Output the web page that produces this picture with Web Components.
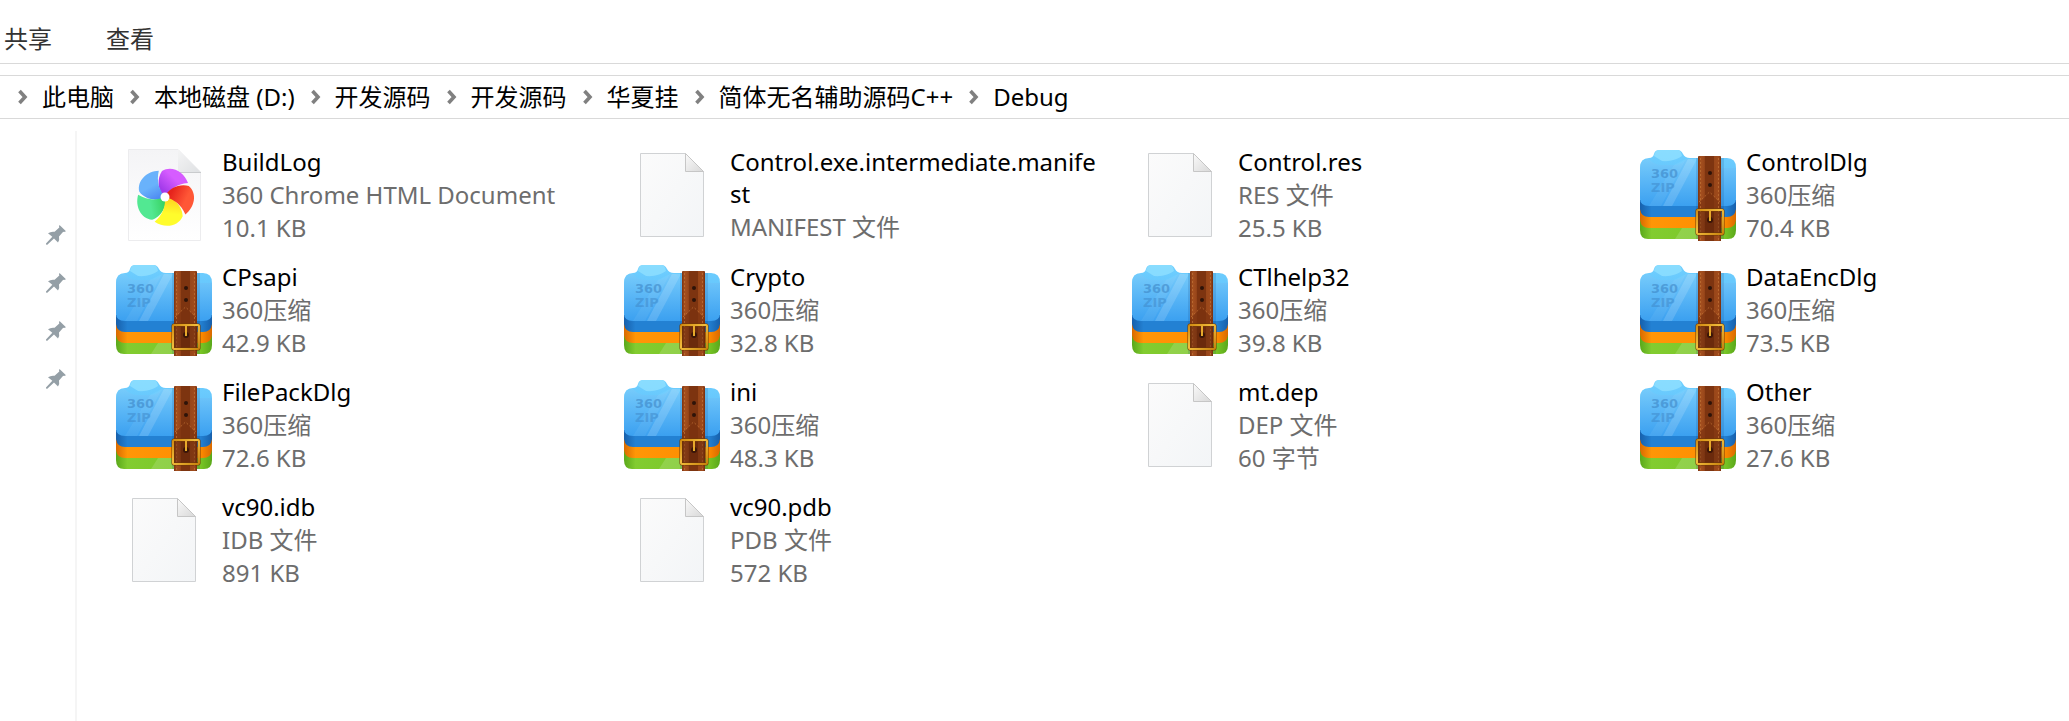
<!DOCTYPE html>
<html lang="zh-CN">
<head>
    <meta charset="utf-8">
    <title>Debug</title>
    <style>
    html, body {
      height: 100%;
      margin: 0;
      background: #fff;
    }
    </style>
</head>
<body>

    <explorer-window>
        <ribbon-tabs slot="ribbon">
            <button>共享</button>
            <button>查看</button>
        </ribbon-tabs>

        <path-bar slot="path">
            <path-crumb>此电脑</path-crumb>
            <path-crumb>本地磁盘 (D:)</path-crumb>
            <path-crumb>开发源码</path-crumb>
            <path-crumb>开发源码</path-crumb>
            <path-crumb>华夏挂</path-crumb>
            <path-crumb>简体无名辅助源码C++</path-crumb>
            <path-crumb>Debug</path-crumb>
        </path-bar>

        <quick-access slot="side"></quick-access>

        <file-grid>
            <file-item icon="html" name="BuildLog" type="360 Chrome HTML Document" size="10.1 KB"></file-item>
            <file-item icon="blank" name="Control.exe.intermediate.manifest" type="MANIFEST 文件"></file-item>
            <file-item icon="blank" name="Control.res" type="RES 文件" size="25.5 KB"></file-item>
            <file-item icon="zip" name="ControlDlg" type="360压缩" size="70.4 KB"></file-item>
            <file-item icon="zip" name="CPsapi" type="360压缩" size="42.9 KB"></file-item>
            <file-item icon="zip" name="Crypto" type="360压缩" size="32.8 KB"></file-item>
            <file-item icon="zip" name="CTlhelp32" type="360压缩" size="39.8 KB"></file-item>
            <file-item icon="zip" name="DataEncDlg" type="360压缩" size="73.5 KB"></file-item>
            <file-item icon="zip" name="FilePackDlg" type="360压缩" size="72.6 KB"></file-item>
            <file-item icon="zip" name="ini" type="360压缩" size="48.3 KB"></file-item>
            <file-item icon="blank" name="mt.dep" type="DEP 文件" size="60 字节"></file-item>
            <file-item icon="zip" name="Other" type="360压缩" size="27.6 KB"></file-item>
            <file-item icon="blank" name="vc90.idb" type="IDB 文件" size="891 KB"></file-item>
            <file-item icon="blank" name="vc90.pdb" type="PDB 文件" size="572 KB"></file-item>
        </file-grid>
    </explorer-window>

    <template id="tmpl-window">
        <style>
        :host {
          display: flex;
          flex-direction: column;
          min-height: 100%;
          color: #000;
          font: 24px/32px "Noto Sans", "Noto Sans CJK SC", sans-serif;
        }
        header {
          padding: 23px 0 8px;
          border-bottom: 1px solid #d9d9d9;
        }
        .path {
          margin-top: 11px;
          padding: 5px 0;
          border-top: 1px solid #d9d9d9;
          border-bottom: 1px solid #d9d9d9;
        }
        .body {
          flex: 1;
          display: flex;
          padding-top: 12px;
        }
        aside {
          flex: none;
          width: 75px;
          border-right: 2px solid #f5f5f5;
        }
        main {
          flex: 1;
          min-width: 0;
          padding: 15px 0 15px 39px;
        }
        </style>
        <header><slot name="ribbon"></slot></header>
        <div class="path"><slot name="path"></slot></div>
        <div class="body">
            <aside><slot name="side"></slot></aside>
            <main><slot></slot></main>
        </div>
    </template>

    <template id="tmpl-tabs">
        <style>
        :host {
          display: flex;
          gap: 54px;
          padding-left: 4px;
        }
        ::slotted(button) {
          padding: 0;
          border: 0;
          background: none;
          color: #333;
          font: inherit;
        }
        </style>
        <slot></slot>
    </template>

    <template id="tmpl-path">
        <style>
        :host {
          display: block;
        }
        nav {
          display: flex;
          padding-left: 2px;
        }
        </style>
        <nav aria-label="路径"><slot></slot></nav>
    </template>

    <template id="tmpl-crumb">
        <style>
        :host {
          display: flex;
          align-items: center;
          white-space: nowrap;
        }
        svg {
          margin: 0 14px 0 16px;
        }
        button {
          padding: 0;
          border: 0;
          background: none;
          color: inherit;
          font: inherit;
        }
        </style>
        <svg width="10" height="16" viewBox="0 0 10 16" aria-hidden="true">
            <path d="M1.500 2L7 8l-5.500 6" fill="none" stroke="#808080" stroke-width="3.600"/>
        </svg>
        <button><slot></slot></button>
    </template>

    <template id="tmpl-quick">
        <style>
        :host {
          display: flex;
          flex-direction: column;
          align-items: flex-end;
          gap: 28px;
          padding: 94px 9px 0 0;
        }
        </style>
    </template>

    <template id="tmpl-pin">
        <svg width="20" height="20" viewBox="0 0 20 20" aria-hidden="true">
            <path d="M13.500 0L20 6.300L18 7L17.200 6.800L13 11.400Q13.800 14.500 12 17.500L8 13.600L1 20L0 19.300L0 18.600L6.300 11.800L2 8.200Q5 6.200 8.600 6.800L13.300 2.600L13 1.200Z" fill="#949fa6"/>
        </svg>
    </template>

    <template id="tmpl-grid">
        <style>
        :host {
          display: grid;
          grid-template-columns: repeat(3, 508fr) 429fr;
          row-gap: 17px;
        }
        </style>
        <slot></slot>
    </template>

    <template id="tmpl-item">
        <style>
        :host {
          display: flex;
          gap: 10px;
          min-height: 98px;
          padding-right: 28px;
        }
        .icon {
          flex: none;
          width: 96px;
          height: 96px;
          padding-top: 2px;
        }
        .text {
          min-width: 0;
          color: #6d6d6d;
          line-height: 33px;
        }
        .name {
          color: #000;
          line-height: 32px;
          word-break: break-all;
        }
        </style>
        <div class="icon"></div>
        <div class="text">
            <div class="name"></div>
            <div class="type"></div>
            <div class="size"></div>
        </div>
    </template>

    <template id="icon-blank">
        <svg width="96" height="96" viewBox="0 0 96 96" aria-hidden="true">
            <defs>
                <linearGradient id="sheet" x1="0" y1="0" x2="1" y2="1">
                    <stop offset="0" stop-color="#fbfbfb"/>
                    <stop offset="1" stop-color="#f3f5f7"/>
                </linearGradient>
                <linearGradient id="fold" x1="0" y1="0" x2="1" y2="1">
                    <stop offset="0" stop-color="#fafafa"/>
                    <stop offset="1" stop-color="#d8d8d8"/>
                </linearGradient>
            </defs>
            <path d="M16.500 5.500H61.500L79.500 23.500V88.500H16.500Z" fill="url(#sheet)" stroke="#d0d2d4"/>
            <path d="M61.500 5.500V23.500H79.500Z" fill="url(#fold)" stroke="#c6c6c6"/>
        </svg>
    </template>

    <template id="icon-html">
        <svg width="96" height="96" viewBox="0 0 96 96" aria-hidden="true">
            <defs>
                <linearGradient id="sheet" x1="0" y1="0" x2="0" y2="1">
                    <stop offset="0" stop-color="#f4f4f6"/>
                    <stop offset="1" stop-color="#fff"/>
                </linearGradient>
                <linearGradient id="fold" x1="0" y1="0" x2="1" y2="1">
                    <stop offset="0" stop-color="#f4f4f5"/>
                    <stop offset="1" stop-color="#dfe1e3"/>
                </linearGradient>
                <linearGradient id="purple" x1="0" y1="1" x2="1" y2="0">
                    <stop offset="0.200" stop-color="#a33bea"/>
                    <stop offset="0.600" stop-color="#d65cff"/>
                </linearGradient>
                <linearGradient id="red" x1="0" y1="1" x2="1" y2="0">
                    <stop offset="0.200" stop-color="#e6241c"/>
                    <stop offset="0.600" stop-color="#ff5736"/>
                </linearGradient>
                <linearGradient id="yellow" x1="0" y1="1" x2="1" y2="0">
                    <stop offset="0.100" stop-color="#ffd01f"/>
                    <stop offset="0.500" stop-color="#fffc2c"/>
                </linearGradient>
                <linearGradient id="green" x1="0" y1="1" x2="1" y2="0">
                    <stop offset="0.100" stop-color="#35cf5c"/>
                    <stop offset="0.500" stop-color="#52e892"/>
                </linearGradient>
                <linearGradient id="blue" x1="0" y1="1" x2="1" y2="0">
                    <stop offset="0.100" stop-color="#4a83f0"/>
                    <stop offset="0.500" stop-color="#69b2fb"/>
                </linearGradient>
            </defs>
            <path d="M12.500 1.500H62L84.500 24V92.500H12.500Z" fill="url(#sheet)" stroke="#ececee"/>
            <path d="M62 1.500V24H84.500Z" fill="url(#fold)"/>
            <path d="M62 24.500H85" stroke="#c9cbcd"/>
            <path d="M49 49C41 43 41 30 46 23C56 17 68 24 72 35C61 36 54 41 49 49Z" fill="url(#purple)"/>
            <path transform="rotate(-72 49 49)" d="M49 49C41 43 41 30 46 23C56 17 68 24 72 35C61 36 54 41 49 49Z" fill="url(#blue)"/>
            <path transform="rotate(-144 49 49)" d="M49 49C41 43 41 30 46 23C56 17 68 24 72 35C61 36 54 41 49 49Z" fill="url(#green)"/>
            <path transform="rotate(144 49 49)" d="M49 49C41 43 41 30 46 23C56 17 68 24 72 35C61 36 54 41 49 49Z" fill="url(#yellow)"/>
            <path transform="rotate(72 49 49)" d="M49 49C41 43 41 30 46 23C56 17 68 24 72 35C61 36 54 41 49 49Z" fill="url(#red)"/>
            <circle cx="49" cy="49" r="4.500" fill="#fff"/>
        </svg>
    </template>

    <template id="icon-zip">
        <svg width="96" height="96" viewBox="0 0 96 96" role="img" aria-label="360 ZIP">
            <defs>
                <linearGradient id="back" x1="0" y1="0" x2="0" y2="1">
                    <stop offset="0" stop-color="#6fcfff"/>
                    <stop offset="1" stop-color="#5cbcf8"/>
                </linearGradient>
                <linearGradient id="front" x1="0" y1="0" x2="0" y2="1">
                    <stop offset="0" stop-color="#76cbfb"/>
                    <stop offset="0.500" stop-color="#58b5f6"/>
                    <stop offset="1" stop-color="#3ba0f0"/>
                </linearGradient>
                <linearGradient id="edge" x1="0" y1="0" x2="1" y2="0">
                    <stop offset="0" stop-color="#1760ac"/>
                    <stop offset="0.120" stop-color="#2381d3"/>
                    <stop offset="0.880" stop-color="#2381d3"/>
                    <stop offset="1" stop-color="#1760ac"/>
                </linearGradient>
                <linearGradient id="orange" x1="0" y1="0" x2="1" y2="0">
                    <stop offset="0" stop-color="#d96a00"/>
                    <stop offset="0.120" stop-color="#ff9607"/>
                    <stop offset="0.880" stop-color="#ff8c00"/>
                    <stop offset="1" stop-color="#d96a00"/>
                </linearGradient>
                <linearGradient id="green" x1="0" y1="0" x2="1" y2="0">
                    <stop offset="0" stop-color="#5aa81a"/>
                    <stop offset="0.120" stop-color="#82cc30"/>
                    <stop offset="0.880" stop-color="#79c626"/>
                    <stop offset="1" stop-color="#5aa81a"/>
                </linearGradient>
                <linearGradient id="leather" x1="0" y1="0" x2="1" y2="0">
                    <stop offset="0" stop-color="#7c3310"/>
                    <stop offset="0.120" stop-color="#a5501f"/>
                    <stop offset="0.280" stop-color="#98461a"/>
                    <stop offset="0.300" stop-color="#7d3410"/>
                    <stop offset="0.680" stop-color="#7d3410"/>
                    <stop offset="0.700" stop-color="#984619"/>
                    <stop offset="0.900" stop-color="#a04b1c"/>
                    <stop offset="1" stop-color="#742d0c"/>
                </linearGradient>
                <linearGradient id="brass" x1="0" y1="0" x2="1" y2="1">
                    <stop offset="0" stop-color="#d18a10"/>
                    <stop offset="0.450" stop-color="#f2bd3c"/>
                    <stop offset="1" stop-color="#c8820c"/>
                </linearGradient>
            </defs>
            <path d="M0 70H96V82Q96 91 88 91H8Q0 91 0 82Z" fill="url(#green)"/>
            <path d="M0 60H96V72Q95 80 87 80H9Q1 80 0 72Z" fill="url(#orange)"/>
            <path d="M0 50H96V61Q95 69 87 69H9Q1 69 0 61Z" fill="url(#edge)"/>
            <path d="M0 20Q0 10 9 10Q13 10 14 6Q15 2 19 2H38Q41 2 43 6Q45 10 50 10H87Q96 10 96 20V52H0Z" fill="url(#back)"/>
            <path d="M14 8Q15 2 19 2H38Q41 2 42 8Q34 14 22 13Z" fill="#9be6ff" opacity="0.600"/>
            <path d="M0 22Q0 11 9 11Q14 17 22 17H34Q42 17 46 11H52Q58 20 66 20H96V50Q96 58 87 58H9Q0 58 0 50Z" fill="url(#front)"/>
            <path d="M48 11H57L32 58H23Z" fill="#fff" opacity="0.150"/>
            <path d="M46 11L21 58H9L34 17Z" fill="#fff" opacity="0.060"/>
            <path d="M42 80H58V91H35Z" fill="#fff" opacity="0.150"/>
            <text x="11" y="30" font-family="DejaVu Sans" font-size="13" font-weight="bold" fill="#3d86c6" fill-opacity="0.600">360</text>
            <text x="11" y="44" font-family="DejaVu Sans" font-size="13" font-weight="bold" fill="#3d86c6" fill-opacity="0.500">ZIP</text>
            <path d="M56 10H58V91H56ZM81 10H84V91H81Z" fill="#0d3f77" opacity="0.150"/>
            <path d="M58 9Q58 8 59 8H80Q81 8 81 9V93H58Z" fill="url(#leather)"/>
            <path d="M58 56L69.500 44L81 56V64H58Z" fill="#7a3210" opacity="0.700"/>
            <path d="M60.500 10V92M78.500 10V92M59 54L69.500 44L80 54" fill="none" stroke="#c27436" stroke-dasharray="2 2" opacity="0.700"/>
            <circle cx="70" cy="25" r="2" fill="#2d1309"/>
            <circle cx="70" cy="37" r="2" fill="#2d1309"/>
            <path d="M58 64H81V85H58Z" fill="#4a1b07" opacity="0.350"/>
            <rect x="57" y="62" width="26" height="24" rx="1" fill="none" stroke="#6e3a05" stroke-width="3"/>
            <rect x="57" y="62" width="26" height="24" rx="1" fill="none" stroke="url(#brass)" stroke-width="2"/>
            <circle cx="70" cy="72" r="3" fill="#3a1608"/>
            <path d="M70 62V73" stroke="#e6a92b" stroke-width="2"/>
        </svg>
    </template>

    <script>
    function attach(el, id) {
      const root = el.attachShadow({mode: 'open'});
      root.appendChild(document.getElementById(id).content.cloneNode(true));
      return root;
    }

    // Elements that only need their template.
    function define(name, id) {
      customElements.define(name, class extends HTMLElement {
        constructor() {
          super();
          attach(this, id);
        }
      });
    }

    define('explorer-window', 'tmpl-window');
    define('ribbon-tabs', 'tmpl-tabs');
    define('path-bar', 'tmpl-path');
    define('path-crumb', 'tmpl-crumb');

    class QuickAccess extends HTMLElement {
        connectedCallback() {
          const root = attach(this, 'tmpl-quick');
          const pin = document.getElementById('tmpl-pin').content;
          for (let i = 0; i < 4; i++) {
            root.appendChild(pin.cloneNode(true));
          }
        }
    }
    customElements.define('quick-access', QuickAccess);

    class FileGrid extends HTMLElement {
        connectedCallback() {
          attach(this, 'tmpl-grid');
          this.setAttribute('role', 'list');
        }
    }
    customElements.define('file-grid', FileGrid);

    class FileItem extends HTMLElement {
        connectedCallback() {
          const root = attach(this, 'tmpl-item');
          const icon = document.getElementById('icon-' + this.getAttribute('icon'));
          root.querySelector('.icon').appendChild(icon.content.cloneNode(true));
          for (const part of ['name', 'type', 'size']) {
            root.querySelector('.' + part).textContent = this.getAttribute(part) || '';
          }
          this.setAttribute('role', 'listitem');
        }
    }
    customElements.define('file-item', FileItem);
    </script>

</body>
</html>
